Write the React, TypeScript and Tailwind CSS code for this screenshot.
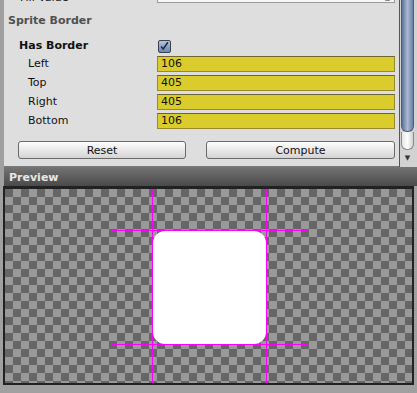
import React from "react";

const borders = [
  { label: "Left", value: "106" },
  { label: "Top", value: "405" },
  { label: "Right", value: "405" },
  { label: "Bottom", value: "106" },
];

function Checkbox() {
  return (
    <div className="h-[13px] w-[13px] rounded-[2px] border border-[#3c4250] bg-gradient-to-b from-[#b4c4dc] to-[#6d86ae]">
      <svg viewBox="0 0 13 13" className="h-full w-full">
        <path d="M2.5 6.5 L5 9.5 L10.5 1.5" fill="none" stroke="#1b2a44" strokeWidth="1.8" />
      </svg>
    </div>
  );
}

function Button({ children, className }: { children: React.ReactNode; className?: string }) {
  return (
    <div
      className={
        "flex h-[18px] items-center justify-center rounded-[3px] border border-[#6a6a6a] bg-gradient-to-b from-[#fefefe] to-[#d4d4d4] pt-[2px] text-[11px] text-[#111] " +
        (className ?? "")
      }
    >
      {children}
    </div>
  );
}

function Scrollbar() {
  return (
    <div className="flex w-[18px] flex-col border-l border-[#555] bg-[#d2d2d2] pr-[3px] pl-[1px]">
      <div className="h-[132px] rounded-b-[6px] border-x border-b border-[#4d5d7a] bg-gradient-to-r from-[#5f7398] via-[#aab9d2] to-[#6a7fa4]" />
      <div className="h-[18px] rounded-b-[6px] border-x border-b border-[#8a8a8a] bg-gradient-to-r from-[#e6e6e6] via-[#ffffff] to-[#cfcfcf]" />
      <div className="flex flex-1 items-center justify-center text-[7px] text-[#333]">▼</div>
    </div>
  );
}

function Inspector() {
  return (
    <div className="flex h-[167px] pl-[4px]">
      <div className="flex flex-1 flex-col overflow-hidden border-b border-[#7a7a7a] bg-[#dedede] pr-[4px]">
        <div className="-mt-[10px] flex h-[16px] items-start">
          <div className="w-[153px] pl-[16px] leading-[16px] text-[#111]">Fill Value</div>
          <div className="flex h-[13px] flex-1 items-center justify-end border border-[#9a9a9a] bg-[#f6f6f6] pr-[2px] text-[10px] leading-none text-[#555]">
            ◎
          </div>
        </div>
        <div className="mt-[6px] flex h-[18px] items-center pl-[4px] font-bold text-[#505050]">Sprite Border</div>
        <div className="mt-[8px] flex h-[16px] items-center">
          <div className="w-[153px] pl-[15px] font-bold text-[#111]">Has Border</div>
          <div className="pl-[1px]">
            <Checkbox />
          </div>
        </div>
        <div className="mt-[2px] flex flex-col gap-[3px]">
          {borders.map((b) => (
            <div key={b.label} className="flex h-[16px] items-center">
              <div className="w-[153px] pl-[24px] text-[#111]">{b.label}</div>
              <div className="flex h-[16px] flex-1 items-center border border-[#97892c] border-t-[#6c6530] bg-[#dacc2d] pl-[3px] text-[#111]">
                {b.value}
              </div>
            </div>
          ))}
        </div>
        <div className="mt-[12px] flex gap-[20px] pl-[14px]">
          <Button className="w-[168px]">Reset</Button>
          <Button className="flex-1">Compute</Button>
        </div>
      </div>
      <Scrollbar />
    </div>
  );
}

function Preview() {
  return (
    <div className="flex flex-col">
      <div className="ml-[4px] flex h-[19px] items-center bg-gradient-to-b from-[#747474] to-[#4a4a4a] pt-[4px] pl-[5px] font-bold text-[#e6e6e6]">
        Preview
      </div>
      <div className="mr-[3px] ml-[3px] border-x-2 border-t-[3px] border-b-2 border-[#222]">
        <div className="relative flex h-[194px] items-center justify-center bg-[conic-gradient(#999999_25%,#666666_0_50%,#999999_0_75%,#666666_0)] bg-[length:16px_16px]">
          <div className="ml-[2px] mt-[2px] h-[113px] w-[113px] rounded-[12px] bg-white" />
          <div className="absolute top-0 left-[147px] h-full w-px bg-[#ff00ff]" />
          <div className="absolute top-0 left-[261px] h-full w-px bg-[#ff00ff]" />
          <div className="absolute top-[41px] left-[107px] h-px w-[195px] bg-[#ff00ff]" />
          <div className="absolute top-[155px] left-[107px] h-px w-[195px] bg-[#ff00ff]" />
        </div>
      </div>
    </div>
  );
}

export default function App() {
  return (
    <div className="h-[393px] w-[417px] overflow-hidden bg-[#a0a0a0] font-['DejaVu_Sans',sans-serif] text-[11px]">
      <Inspector />
      <Preview />
    </div>
  );
}
